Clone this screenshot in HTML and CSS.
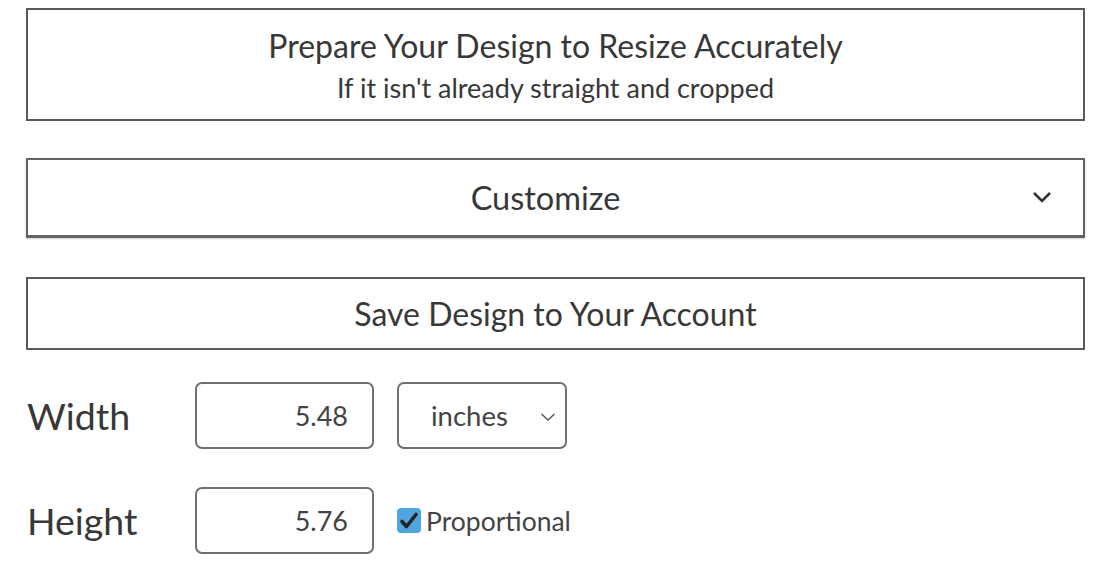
FILE: index.html
```html
<!DOCTYPE html>
<html>
<head>
<meta charset="utf-8">
<link rel="stylesheet" href="styles.css">
</head>
<body>
<div class="page">
  <div class="panel panel-prepare">
    <div class="title">Prepare Your Design to Resize Accurately</div>
    <div class="subtitle">If it isn't already straight and cropped</div>
  </div>
  <div class="panel panel-custom">
    <div class="title">Customize</div>
    <svg class="chev" width="20" height="12" viewBox="0 0 20 12"><path d="M2 2 L10 10 L18 2" fill="none" stroke="#333" stroke-width="2.6"/></svg>
  </div>
  <div class="panel panel-save">
    <div class="title">Save Design to Your Account</div>
  </div>
  <div class="row row-width">
    <div class="label">Width</div>
    <div class="field">5.48</div>
    <div class="select">
      <span>inches</span>
      <svg class="schev" width="16" height="10" viewBox="0 0 16 10"><path d="M1.5 2 L8 8 L14.5 2" fill="none" stroke="#555" stroke-width="1.5"/></svg>
    </div>
  </div>
  <div class="row row-height">
    <div class="label">Height</div>
    <div class="field">5.76</div>
    <div class="check">
      <span class="box"><svg width="24" height="24" viewBox="0 0 24 24"><path d="M5 12.5 L9.5 17.5 L19 5.5" fill="none" stroke="#222" stroke-width="3.6" stroke-linecap="round" stroke-linejoin="round"/></svg></span>
      <span class="clabel">Proportional</span>
    </div>
  </div>
</div>
</body>
</html>
```

FILE: styles.css
```css
html, body {
  margin: 0;
  padding: 0;
  background: #fff;
}
body {
  font-family: Lato, "Open Sans", sans-serif;
  color: #383838;
}
.page {
  padding: 8px 35px 0 26px;
  display: flex;
  flex-direction: column;
}
.panel {
  box-sizing: border-box;
  border: 2px solid #5a5a5a;
  display: flex;
  flex-direction: column;
  align-items: center;
  justify-content: center;
  position: relative;
}
.panel-prepare {
  height: 113px;
  padding-top: 7px;
}
.panel-prepare .title {
  font-size: 32px;
  line-height: 40px;
}
.subtitle {
  font-size: 27px;
  line-height: 44px;
}
.panel-custom {
  margin-top: 37px;
  height: 80px;
  padding-right: 20px;
  border-bottom-width: 3px;
  border-color: #636363;
  box-shadow: 0 1px 2px rgba(0,0,0,0.18);
}
.panel-custom .title {
  font-size: 32.5px;
}
.chev {
  position: absolute;
  right: 31px;
  top: 31px;
}
.panel-save {
  margin-top: 39px;
  height: 73px;
}
.panel-save .title {
  font-size: 32px;
}
.row {
  display: flex;
  align-items: center;
  height: 67px;
}
.row-width {
  margin-top: 32px;
}
.row-height {
  margin-top: 38px;
}
.label {
  width: 168px;
  font-size: 37.5px;
  padding-left: 1px;
}
.field {
  box-sizing: border-box;
  width: 179px;
  height: 67px;
  border: 2px solid #707070;
  border-radius: 7px;
  display: flex;
  align-items: center;
  justify-content: flex-end;
  padding-right: 24px;
  font-size: 27px;
  color: #444;
}
.select {
  box-sizing: border-box;
  margin-left: 23px;
  width: 170px;
  height: 67px;
  border: 2px solid #707070;
  border-radius: 7px;
  display: flex;
  align-items: center;
  padding-left: 32px;
  font-size: 27.5px;
  color: #444;
  position: relative;
}
.schev {
  position: absolute;
  right: 9px;
  top: 28px;
}
.check {
  margin-left: 23px;
  display: flex;
  align-items: center;
  gap: 5px;
}
.box {
  width: 24px;
  height: 25px;
  border-radius: 4px;
  background: #4fa6df;
  display: flex;
  align-items: center;
  justify-content: center;
}
.clabel {
  font-size: 26.5px;
  color: #444;
}
```
